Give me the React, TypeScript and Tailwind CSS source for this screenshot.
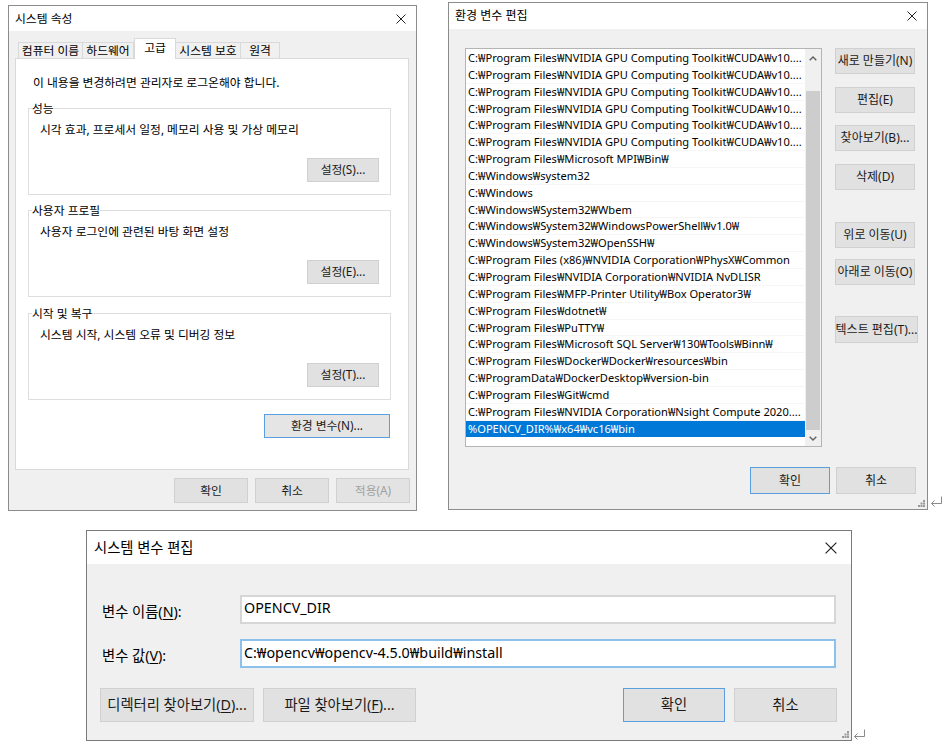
import React from "react";

const listItems = [
  "C:₩Program Files₩NVIDIA GPU Computing Toolkit₩CUDA₩v10....",
  "C:₩Program Files₩NVIDIA GPU Computing Toolkit₩CUDA₩v10....",
  "C:₩Program Files₩NVIDIA GPU Computing Toolkit₩CUDA₩v10....",
  "C:₩Program Files₩NVIDIA GPU Computing Toolkit₩CUDA₩v10....",
  "C:₩Program Files₩NVIDIA GPU Computing Toolkit₩CUDA₩v10....",
  "C:₩Program Files₩NVIDIA GPU Computing Toolkit₩CUDA₩v10....",
  "C:₩Program Files₩Microsoft MPI₩Bin₩",
  "C:₩Windows₩system32",
  "C:₩Windows",
  "C:₩Windows₩System32₩Wbem",
  "C:₩Windows₩System32₩WindowsPowerShell₩v1.0₩",
  "C:₩Windows₩System32₩OpenSSH₩",
  "C:₩Program Files (x86)₩NVIDIA Corporation₩PhysX₩Common",
  "C:₩Program Files₩NVIDIA Corporation₩NVIDIA NvDLISR",
  "C:₩Program Files₩MFP-Printer Utility₩Box Operator3₩",
  "C:₩Program Files₩dotnet₩",
  "C:₩Program Files₩PuTTY₩",
  "C:₩Program Files₩Microsoft SQL Server₩130₩Tools₩Binn₩",
  "C:₩Program Files₩Docker₩Docker₩resources₩bin",
  "C:₩ProgramData₩DockerDesktop₩version-bin",
  "C:₩Program Files₩Git₩cmd",
  "C:₩Program Files₩NVIDIA Corporation₩Nsight Compute 2020....",
  "%OPENCV_DIR%₩x64₩vc16₩bin",
];

function CloseX({ size = 10 }: { size?: number }) {
  return (
    <svg width={size} height={size} viewBox="0 0 10 10" className="text-[#222]">
      <path d="M0.5 0.5L9.5 9.5M9.5 0.5L0.5 9.5" stroke="currentColor" strokeWidth="1" fill="none" />
    </svg>
  );
}

function Grip() {
  return (
    <svg width="7" height="7" viewBox="0 0 7 7" className="absolute right-[2px] bottom-[2px] text-[#9a9a9a]">
      <rect x="5" y="0" width="2" height="2" fill="currentColor" />
      <rect x="5" y="2.5" width="2" height="2" fill="currentColor" />
      <rect x="2.5" y="2.5" width="2" height="2" fill="currentColor" />
      <rect x="5" y="5" width="2" height="2" fill="currentColor" />
      <rect x="2.5" y="5" width="2" height="2" fill="currentColor" />
      <rect x="0" y="5" width="2" height="2" fill="currentColor" />
    </svg>
  );
}

function ReturnMark() {
  return (
    <svg width="13" height="11" viewBox="0 0 13 11" className="text-[#8a8a8a] shrink-0">
      <path d="M11.5 0.5V7.5H1.5M4.5 4.5L1.5 7.5L4.5 10.5" stroke="currentColor" strokeWidth="1" fill="none" />
    </svg>
  );
}

function Btn({
  children,
  className = "",
  focused = false,
  disabled = false,
}: {
  children: React.ReactNode;
  className?: string;
  focused?: boolean;
  disabled?: boolean;
}) {
  const border = focused ? "border-[#5aa0e0]" : "border-[#d0d0d0]";
  const tone = disabled ? "text-[#a0a0a0] bg-[#e3e3e3]" : "text-[#1a1a1a] bg-[#e1e1e1]";
  return (
    <div className={`flex items-center justify-center border whitespace-nowrap overflow-hidden shrink-0 ${border} ${tone} ${className}`}>
      {children}
    </div>
  );
}

function Group({ label, text, button }: { label: string; text: string; button: string }) {
  return (
    <fieldset className="border border-[#dedede] ml-[12px] w-[363px] pb-[12px]">
      <legend className="ml-[3px] leading-[16px] bg-white">{label}</legend>
      <div className="ml-[11px] mt-[5px] leading-[16px]">{text}</div>
      <div className="flex justify-end mr-[11px] mt-[21px]">
        <Btn className="w-[72px] h-[24px]">{button}</Btn>
      </div>
    </fieldset>
  );
}

function SystemProperties() {
  const tabs = [
    { name: "컴퓨터 이름", w: "w-[65px]" },
    { name: "하드웨어", w: "w-[52px]" },
    { name: "고급", w: "w-[42px]", active: true },
    { name: "시스템 보호", w: "w-[66px]" },
    { name: "원격", w: "w-[40px]" },
  ];
  return (
    <div className="w-[409px] h-[506px] border border-[#8c8c8c] bg-[#f0f0f0] flex flex-col text-[11.8px] text-black">
      <div className="h-[25px] bg-white flex items-center justify-between pl-[6px] pr-[10px] shrink-0">
        <span>시스템 속성</span>
        <CloseX />
      </div>

      {/* tabs */}
      <div className="flex items-end h-[20px] mt-[7px] pl-[9px] shrink-0">
        {tabs.map((t) =>
          t.active ? (
            <div
              key={t.name}
              className={`${t.w} h-[21px] -mb-px relative z-10 bg-white border-t border-x border-[#d9d9d9] flex items-center justify-center pb-[3px]`}
            >
              {t.name}
            </div>
          ) : (
            <div
              key={t.name}
              className={`${t.w} h-[16px] border-t border-x border-[#d9d9d9] -ml-px first:ml-0 flex items-center justify-center leading-none`}
            >
              {t.name}
            </div>
          )
        )}
      </div>

      {/* panel */}
      <div className="ml-[6px] w-[394px] h-[412px] bg-white border border-[#d9d9d9] flex flex-col shrink-0">
        <div className="ml-[17px] mt-[15px] leading-[16px]">이 내용을 변경하려면 관리자로 로그온해야 합니다.</div>
        <div className="mt-[10px]">
          <Group label="성능" text="시각 효과, 프로세서 일정, 메모리 사용 및 가상 메모리" button="설정(S)..." />
        </div>
        <div className="mt-[7px]">
          <Group label="사용자 프로필" text="사용자 로그인에 관련된 바탕 화면 설정" button="설정(E)..." />
        </div>
        <div className="mt-[8px]">
          <Group label="시작 및 복구" text="시스템 시작, 시스템 오류 및 디버깅 정보" button="설정(T)..." />
        </div>
        <div className="flex justify-end w-[374px] mt-[14px]">
          <Btn focused className="w-[126px] h-[24px] bg-[#e5e5e5]">환경 변수(N)...</Btn>
        </div>
      </div>

      {/* footer */}
      <div className="flex justify-end gap-[7px] pr-[6px] mt-[8px]">
        <Btn className="w-[74px] h-[25px]">확인</Btn>
        <Btn className="w-[74px] h-[25px]">취소</Btn>
        <Btn disabled className="w-[74px] h-[25px]">적용(A)</Btn>
      </div>
    </div>
  );
}

function Chevron({ up }: { up?: boolean }) {
  return (
    <svg width="8" height="5" viewBox="0 0 8 5" className="text-[#606060]">
      <path d={up ? "M0.7 4.3L4 1L7.3 4.3" : "M0.7 0.7L4 4L7.3 0.7"} stroke="currentColor" strokeWidth="1.4" fill="none" />
    </svg>
  );
}

function EditEnvironment() {
  return (
    <div className="relative w-[480px] h-[508px] border border-[#8c8c8c] bg-[#f0f0f0] flex flex-col text-[12px] text-black">
      <div className="h-[26px] bg-white flex items-center justify-between pl-[6px] pr-[10px] shrink-0">
        <span>환경 변수 편집</span>
        <CloseX />
      </div>

      <div className="flex mt-[19px] pl-[16px]">
        {/* list box */}
        <div className="w-[357px] h-[399px] border border-[#b4b4b4] bg-white flex">
          <div className="flex-1 pt-[1px] overflow-hidden text-[11.1px]">
            {listItems.map((p, i) => {
              const selected = i === listItems.length - 1;
              return (
                <div
                  key={i}
                  className={`h-[16.85px] leading-[16.85px] pl-[2px] whitespace-nowrap overflow-hidden ${
                    selected ? "bg-[#0078d7] text-white" : "border-b border-[#f6f6f6]"
                  }`}
                >
                  {p}
                </div>
              );
            })}
          </div>
          <div className="w-[16px] bg-[#f0f0f0] flex flex-col">
            <div className="h-[17px] flex items-center justify-center pt-[2px]">
              <Chevron up />
            </div>
            <div className="flex-1 flex flex-col justify-end">
              <div className="h-[339px] bg-[#cdcdcd] mx-[1px]" />
            </div>
            <div className="h-[16px] flex items-center justify-center">
              <Chevron />
            </div>
          </div>
        </div>

        {/* buttons */}
        <div className="ml-[13px] flex flex-col">
          <Btn className="w-[80px] h-[26px]">새로 만들기(N)</Btn>
          <Btn className="w-[80px] h-[26px] mt-[13px]">편집(E)</Btn>
          <Btn className="w-[80px] h-[26px] mt-[12px]">찾아보기(B)...</Btn>
          <Btn className="w-[80px] h-[26px] mt-[13px]">삭제(D)</Btn>
          <Btn className="w-[80px] h-[26px] mt-[32px]">위로 이동(U)</Btn>
          <Btn className="w-[80px] h-[26px] mt-[11px]">아래로 이동(O)</Btn>
          <Btn className="w-[83px] h-[27px] mt-[31px]">텍스트 편집(T)...</Btn>
        </div>
      </div>

      <div className="flex justify-end gap-[6px] pr-[11px] mt-[20px]">
        <Btn focused className="w-[80px] h-[27px]">확인</Btn>
        <Btn className="w-[80px] h-[27px]">취소</Btn>
      </div>
      <Grip />
    </div>
  );
}

function Accel({ children }: { children: React.ReactNode }) {
  return <span className="underline underline-offset-2">{children}</span>;
}

function EditSystemVariable() {
  return (
    <div className="relative w-[766px] h-[211px] border border-[#7a7a7a] bg-[#f0f0f0] flex flex-col text-[14.3px] text-black">
      <div className="h-[33px] bg-white flex items-center justify-between pl-[7px] pr-[14px] shrink-0">
        <span>시스템 변수 편집</span>
        <CloseX size={12} />
      </div>

      <div className="flex items-center mt-[31px]">
        <div className="w-[153px] pl-[15px] pt-[4px]">
          변수 이름(<Accel>N</Accel>):
        </div>
        <div className="w-[596px] h-[29px] bg-white border-2 border-[#d6d6d6] flex items-center pl-[2px] pb-[3px]">
          OPENCV_DIR
        </div>
      </div>

      <div className="flex items-center mt-[15px]">
        <div className="w-[153px] pl-[15px] pt-[4px]">
          변수 값(<Accel>V</Accel>):
        </div>
        <div className="w-[596px] h-[29px] bg-white border-2 border-[#8ec0ec] flex items-center pl-[2px] pb-[2px]">
          C:₩opencv₩opencv-4.5.0₩build₩install
        </div>
      </div>

      <div className="flex mt-[20px] pl-[13px] pr-[14px]">
        <Btn className="w-[154px] h-[34px] bg-[#e1e1e1]">
          디렉터리 찾아보기(<Accel>D</Accel>)...
        </Btn>
        <Btn className="w-[153px] h-[34px] ml-[9px]">
          파일 찾아보기(<Accel>F</Accel>)...
        </Btn>
        <div className="flex-1" />
        <Btn focused className="w-[102px] h-[34px]">확인</Btn>
        <Btn className="w-[103px] h-[34px] ml-[9px]">취소</Btn>
      </div>
      <Grip />
    </div>
  );
}

export default function App() {
  return (
    <div className="w-[942px] h-[755px] bg-white overflow-hidden font-['Noto_Sans','Noto_Sans_CJK_KR',sans-serif]">
      <div className="flex items-start">
        <div className="ml-[8px] mt-[5px]">
          <SystemProperties />
        </div>
        <div className="ml-[31px] mt-[2px] flex items-end gap-[2px]">
          <EditEnvironment />
          <div className="mb-[3px]">
            <ReturnMark />
          </div>
        </div>
      </div>
      <div className="flex items-end ml-[86px] mt-[19px] gap-[1px]">
        <EditSystemVariable />
        <div className="mb-[1px]">
          <ReturnMark />
        </div>
      </div>
    </div>
  );
}
